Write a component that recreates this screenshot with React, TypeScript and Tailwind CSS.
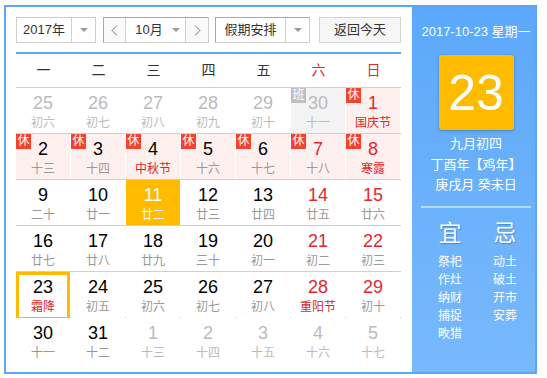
import React from "react";

type C = {
  d: number;
  l: string;
  out?: boolean;
  xiu?: boolean;
  ban?: boolean;
  wk?: boolean;
  hl?: boolean;
  sel?: boolean;
  today?: boolean;
};

const rows: C[][] = [
  [
    { d: 25, l: "初六", out: true },
    { d: 26, l: "初七", out: true },
    { d: 27, l: "初八", out: true },
    { d: 28, l: "初九", out: true },
    { d: 29, l: "初十", out: true },
    { d: 30, l: "十一", out: true, ban: true },
    { d: 1, l: "国庆节", xiu: true, wk: true, hl: true },
  ],
  [
    { d: 2, l: "十三", xiu: true },
    { d: 3, l: "十四", xiu: true },
    { d: 4, l: "中秋节", xiu: true, hl: true },
    { d: 5, l: "十六", xiu: true },
    { d: 6, l: "十七", xiu: true },
    { d: 7, l: "十八", xiu: true, wk: true },
    { d: 8, l: "寒露", xiu: true, wk: true, hl: true },
  ],
  [
    { d: 9, l: "二十" },
    { d: 10, l: "廿一" },
    { d: 11, l: "廿二", sel: true },
    { d: 12, l: "廿三" },
    { d: 13, l: "廿四" },
    { d: 14, l: "廿五", wk: true },
    { d: 15, l: "廿六", wk: true },
  ],
  [
    { d: 16, l: "廿七" },
    { d: 17, l: "廿八" },
    { d: 18, l: "廿九" },
    { d: 19, l: "三十" },
    { d: 20, l: "初一" },
    { d: 21, l: "初二", wk: true },
    { d: 22, l: "初三", wk: true },
  ],
  [
    { d: 23, l: "霜降", hl: true, today: true },
    { d: 24, l: "初五" },
    { d: 25, l: "初六" },
    { d: 26, l: "初七" },
    { d: 27, l: "初八" },
    { d: 28, l: "重阳节", wk: true, hl: true },
    { d: 29, l: "初十", wk: true },
  ],
  [
    { d: 30, l: "十一" },
    { d: 31, l: "十二" },
    { d: 1, l: "十三", out: true },
    { d: 2, l: "十四", out: true },
    { d: 3, l: "十五", out: true },
    { d: 4, l: "十六", out: true },
    { d: 5, l: "十七", out: true },
  ],
];

function Cell({ c }: { c: C }) {
  const bg = c.sel
    ? "bg-[#ffbb00]"
    : c.xiu
    ? "bg-[#fff0f0]"
    : c.ban
    ? "bg-[#f3f3f3]"
    : "bg-white";
  const num = c.sel
    ? "text-white"
    : c.out
    ? "text-[#bbbbbb]"
    : c.wk
    ? "text-[#e4262d]"
    : "text-black";
  const lun = c.sel
    ? "text-white"
    : c.out
    ? "text-[#bbbbbb]"
    : c.hl
    ? "text-[#dd1f26]"
    : "text-[#999999]";
  const border = c.today ? "border-[3px] border-[#ffbb00] pt-[2px]" : "pt-[5px]";
  return (
    <div className="h-full pr-px">
      <div className={`relative h-full flex flex-col items-center ${bg} ${border}`}>
        {c.xiu && (
          <div className="absolute left-0 top-0 w-[15px] h-[15px] bg-[#f5412f] text-white text-[12px] leading-[15px] text-center">
            休
          </div>
        )}
        {c.ban && (
          <div className="absolute left-0 top-0 w-[15px] h-[15px] bg-[#bfbfbf] text-white text-[12px] leading-[15px] text-center">
            班
          </div>
        )}
        <div className={`h-[20px] leading-[20px] text-[18px] ${num}`}>{c.d}</div>
        <div className={`h-[20px] leading-[20px] text-[12px] ${lun}`}>{c.l}</div>
      </div>
    </div>
  );
}

function Tri() {
  return <div className="w-0 h-0 border-x-[4px] border-x-transparent border-t-[4px] border-t-[#9a9a9a]" />;
}

function Chev({ dir }: { dir: "l" | "r" }) {
  return (
    <svg width="7" height="11" viewBox="0 0 7 11">
      <polyline
        points={dir === "l" ? "6,0.5 1,5.5 6,10.5" : "1,0.5 6,5.5 1,10.5"}
        fill="none"
        stroke="#777"
        strokeWidth="1"
      />
    </svg>
  );
}

export default function App() {
  const week = ["一", "二", "三", "四", "五", "六", "日"];
  const yi = ["祭祀", "作灶", "纳财", "捕捉", "畋猎"];
  const ji = ["动土", "破土", "开市", "安葬"];
  return (
    <div className="w-[547px] h-[378px] bg-white font-['Liberation_Sans','Noto_Sans_CJK_SC',sans-serif] overflow-hidden">
      <div className="ml-[4px] mt-[5px] w-[533px] h-[369px] border-2 border-[#5ba6f9] flex">
        <div className="w-[406px] pl-[10px] pr-[11px]">
          <div className="pt-[10px] pb-[9px] border-b-2 border-[#5ba6f9] flex text-[13px] text-[#333]">
            <div className="w-[80px] h-[26px] border border-[#cfcfcf] flex">
              <div className="w-[55px] flex items-center justify-center border-r border-[#cfcfcf]">2017年</div>
              <div className="flex-1 flex items-center justify-center">
                <Tri />
              </div>
            </div>
            <div className="ml-[7px] w-[106px] h-[26px] border border-t-[#a8a8a8] border-l-[#a8a8a8] border-r-[#cfcfcf] border-b-[#cfcfcf] flex">
              <div className="w-[22px] flex items-center justify-center border-r border-[#cfcfcf] bg-[#fafafa]">
                <Chev dir="l" />
              </div>
              <div className="w-[60px] flex items-center justify-center gap-[9px] border-r border-[#cfcfcf] pl-[4px]">
                <span>10月</span>
                <Tri />
              </div>
              <div className="flex-1 flex items-center justify-center bg-[#fafafa]">
                <Chev dir="r" />
              </div>
            </div>
            <div className="ml-[6px] w-[95px] h-[26px] border border-t-[#a8a8a8] border-l-[#a8a8a8] border-r-[#cfcfcf] border-b-[#cfcfcf] flex">
              <div className="w-[70px] flex items-center justify-center border-r border-[#cfcfcf]">假期安排</div>
              <div className="flex-1 flex items-center justify-center">
                <Tri />
              </div>
            </div>
            <div className="ml-[9px] w-[82px] h-[26px] border border-[#d3d3d3] bg-[#f6f6f6] flex items-center justify-center">
              返回今天
            </div>
          </div>
          <div className="grid grid-cols-7 h-[34px] border-b border-[#d0d0d0] text-[14px]">
            {week.map((w, i) => (
              <div
                key={w}
                className={`flex items-center justify-center ${i >= 5 ? "text-[#e4262d]" : "text-[#333]"}`}
              >
                {w}
              </div>
            ))}
          </div>
          {rows.map((r, ri) => (
            <div
              key={ri}
              className={`grid grid-cols-7 h-[46px] ${ri < 5 ? "border-b border-[#d0d0d0]" : ""}`}
            >
              {r.map((c, ci) => (
                <Cell key={ci} c={c} />
              ))}
            </div>
          ))}
        </div>
        <div className="flex-1 bg-linear-to-b from-[#5ca8fa] to-[#78b9fc] pl-[5px] flex flex-col items-center text-white">
          <div className="mt-[15px] h-[20px] leading-[20px] text-[13px]">2017-10-23 星期一</div>
          <div className="mt-[13px] w-[75px] h-[75px] rounded-[3px] bg-[#ffbb00] shadow-[0_1px_3px_rgba(0,0,0,0.25)] flex items-center justify-center text-[50px] leading-none">
            23
          </div>
          <div className="mt-[4px] text-[13px] leading-[20.5px] text-center">
            <div>九月初四</div>
            <div>丁酉年【鸡年】</div>
            <div>庚戌月 癸未日</div>
          </div>
          <div className="mt-[10px] w-[110px] h-[2px] bg-white/50" />
          <div className="mt-[10px] w-full flex pl-[9px] gap-[7px]">
            <div className="w-[48px] flex flex-col items-center">
              <div className="h-[30px] leading-[30px] text-[23px] [text-shadow:1px_1px_1px_rgba(0,60,140,0.35)]">宜</div>
              <div className="mt-[5px] text-[12px] leading-[18.2px] flex flex-col items-center">
                {yi.map((t) => (
                  <div key={t}>{t}</div>
                ))}
              </div>
            </div>
            <div className="w-[48px] flex flex-col items-center">
              <div className="h-[30px] leading-[30px] text-[23px] [text-shadow:1px_1px_1px_rgba(0,60,140,0.35)]">忌</div>
              <div className="mt-[5px] text-[12px] leading-[18.2px] flex flex-col items-center">
                {ji.map((t) => (
                  <div key={t}>{t}</div>
                ))}
              </div>
            </div>
          </div>
        </div>
      </div>
    </div>
  );
}
